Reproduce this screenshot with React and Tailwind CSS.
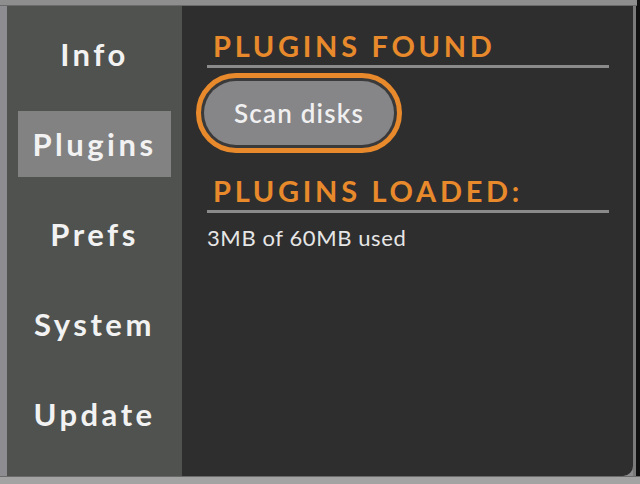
export default function App() {
  const items = ["Info", "Plugins", "Prefs", "System", "Update"];
  return (
    <div className="w-[640px] h-[484px] flex flex-col bg-[#8d8d90] overflow-hidden" style={{ fontFamily: "Lato, 'Open Sans', sans-serif" }}>
      <div className="h-[6px] flex shrink-0">
        <div className="w-[637px] bg-[#8e8e8e] border-b border-[#6a6a6a]"></div>
        <div className="flex-1 bg-[#111]"></div>
      </div>
      <div className="h-[470px] flex shrink-0">
        <div className="w-[7px] bg-[#8d8d91]"></div>
        <div className="w-[175px] bg-[#4f524f] flex flex-col gap-[24px] pt-[15px] px-[11px]">
          {items.map((t) => (
            <div
              key={t}
              className={`h-[66px] flex items-center justify-center text-[31px] font-bold tracking-[3.5px] text-[#f2f2f2] ${t === "Plugins" ? "bg-[#828283]" : ""}`}
            >
              {t}
            </div>
          ))}
        </div>
        <div className="w-[451px] bg-[#2e2e2e] rounded-br-[10px] pl-[25px] pr-[24px] flex flex-col">
          <div className="h-[55px] shrink-0 flex items-end pl-[6px] text-[29px] leading-[30px] font-bold tracking-[3.7px] text-[#e88a2c] whitespace-nowrap">
            PLUGINS FOUND
          </div>
          <div className="h-[3px] shrink-0 bg-[#8a8a8a] mt-[4px]"></div>
          <div className="mt-[5px] ml-[-11px] w-[206px] h-[80px] shrink-0 rounded-full border-[5px] border-[#e88a2c] bg-[#3a3a3a] p-[3px] flex">
            <div className="flex-1 rounded-full bg-[#868588] flex items-center justify-center text-[26px] font-semibold text-[#f0f0f0] tracking-[1.2px] whitespace-nowrap">
              Scan disks
            </div>
          </div>
          <div className="h-[53px] shrink-0 flex items-end pl-[6px] text-[29px] leading-[30px] font-bold tracking-[3.7px] text-[#e88a2c] whitespace-nowrap">
            PLUGINS LOADED:
          </div>
          <div className="h-[3px] shrink-0 bg-[#8a8a8a] mt-[4px]"></div>
          <div className="mt-[14px] text-[22px] leading-[22px] tracking-[0.6px] text-[#e6e6e6] whitespace-nowrap">3MB of 60MB used</div>
        </div>
        <div className="w-[3px] bg-[#7a7a7a]"></div>
        <div className="flex-1 bg-[#111]"></div>
      </div>
      <div className="flex-1 bg-[#a3a3a3] border-t border-[#6a6a6a]"></div>
    </div>
  );
}
